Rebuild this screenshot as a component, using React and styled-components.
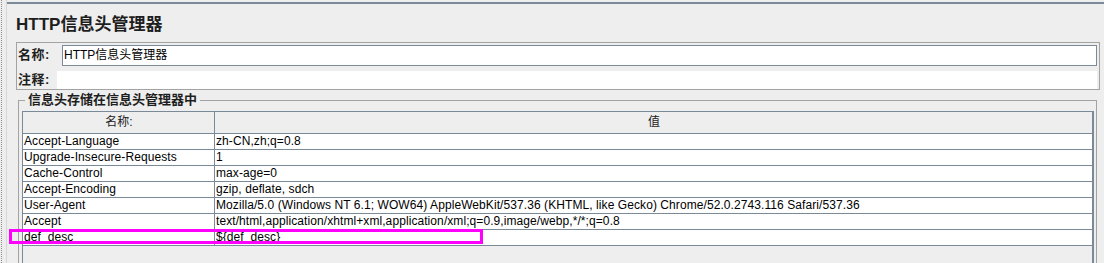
import styled, { createGlobalStyle } from "styled-components";

const GlobalStyle = createGlobalStyle`
  html, body {
    margin: 0;
    padding: 0;
    background: #eeeeee;
  }
  body {
    font-family: "Liberation Sans", "Noto Sans CJK SC", Arial, sans-serif;
    color: #000;
  }
`;

const LINE = "#7b8a99";

const Page = styled.div`
  position: relative;
  width: 1104px;
  height: 263px;
  overflow: hidden;
  display: flex;
  background: #eeeeee;
`;

const Rail = styled.div`
  width: 4px;
  margin-left: 1px;
  border-left: 1px dotted #8c8c8c;
  border-right: 1px solid #d6d6d6;
`;

const Main = styled.div`
  flex: 1;
  margin-top: 2px;
  padding-left: 1px;
  border-top: 2px solid ${LINE};
  display: flex;
  flex-direction: column;
  & > * {
    flex-shrink: 0;
  }
`;

const Title = styled.div`
  height: 38px;
  box-sizing: border-box;
  padding: 11px 0 0 8px;
  font-size: 17px;
  line-height: 20px;
  font-weight: bold;
  color: #1e1e1e;
`;

const NameBox = styled.div`
  margin-left: 8px;
  width: 1084px;
  height: 48px;
  box-sizing: border-box;
  border: 1px solid #a3a3a3;
  display: flex;
  flex-direction: column;
`;

const FieldRow = styled.div`
  display: flex;
  align-items: ${(p) => (p.$bottom ? "flex-end" : "center")};
  height: ${(p) => p.$h}px;
  padding-left: 1px;
`;

const Label = styled.div`
  width: ${(p) => p.$w}px;
  font-size: 13px;
  line-height: 18px;
  font-weight: bold;
  letter-spacing: 0.5px;
  color: #1e1e1e;
`;

const Input = styled.div`
  width: 1035px;
  height: 21px;
  box-sizing: border-box;
  margin-top: 1px;
  border: 1px solid ${LINE};
  background: #fff;
  padding-left: 1px;
  font-size: 12px;
  line-height: 19px;
  color: #000;
`;

const Comment = styled.div`
  width: 1040px;
  height: 18px;
  background: #fff;
`;

const Group = styled.fieldset`
  margin: 2px 0 0 10px;
  width: 1079px;
  box-sizing: border-box;
  padding: 3px 2px 0 3px;
  border: 1px solid #a3a3a3;
  border-bottom: none;
  min-width: 0;
`;

const Legend = styled.legend`
  margin-left: 3px;
  padding: 0 3px;
  font-size: 13px;
  line-height: 16px;
  font-weight: bold;
  color: #1e1e1e;
`;

const Scroll = styled.div`
  height: 200px;
  border-top: 1px solid ${LINE};
  border-left: 1px solid ${LINE};
  border-right: 2px solid ${LINE};
  background: #eeeeee;
`;

const Row = styled.div`
  display: grid;
  grid-template-columns: 192px 1fr;
  height: ${(p) => (p.$head ? 22 : 16)}px;
  background: ${(p) => (p.$head ? "#eeeeee" : "#ffffff")};
`;

const Cell = styled.div`
  box-sizing: border-box;
  border-bottom: 1px solid ${LINE};
  border-right: ${(p) => (p.$first ? `1px solid ${LINE}` : "none")};
  padding-left: 1px;
  font-size: 12px;
  line-height: 15px;
  letter-spacing: 0.08px;
  white-space: nowrap;
  overflow: hidden;
  text-align: ${(p) => (p.$head ? "center" : "left")};
  ${(p) => p.$head && "line-height: 21px; color: #222;"}
`;

const Mark = styled.div`
  position: absolute;
  left: 9px;
  top: 229px;
  width: 474px;
  height: 15px;
  box-sizing: border-box;
  border: 3px solid #ff00ff;
  pointer-events: none;
`;

const headers = [
  ["Accept-Language", "zh-CN,zh;q=0.8"],
  ["Upgrade-Insecure-Requests", "1"],
  ["Cache-Control", "max-age=0"],
  ["Accept-Encoding", "gzip, deflate, sdch"],
  [
    "User-Agent",
    "Mozilla/5.0 (Windows NT 6.1; WOW64) AppleWebKit/537.36 (KHTML, like Gecko) Chrome/52.0.2743.116 Safari/537.36",
  ],
  ["Accept", "text/html,application/xhtml+xml,application/xml;q=0.9,image/webp,*/*;q=0.8"],
  ["def_desc", "${def_desc}"],
];

export default function App() {
  return (
    <>
      <GlobalStyle />
      <Page>
        <Rail />
        <Main>
          <Title>HTTP信息头管理器</Title>
          <NameBox>
            <FieldRow $h={23}>
              <Label $w={44}>名称:</Label>
              <Input>HTTP信息头管理器</Input>
            </FieldRow>
            <FieldRow $h={23} $bottom>
              <Label $w={39}>注释:</Label>
              <Comment />
            </FieldRow>
          </NameBox>
          <Group>
            <Legend>信息头存储在信息头管理器中</Legend>
            <Scroll>
              <Row $head>
                <Cell $head $first>名称:</Cell>
                <Cell $head>值</Cell>
              </Row>
              {headers.map(([name, value]) => (
                <Row key={name}>
                  <Cell $first>{name}</Cell>
                  <Cell>{value}</Cell>
                </Row>
              ))}
            </Scroll>
          </Group>
        </Main>
        <Mark />
      </Page>
    </>
  );
}
